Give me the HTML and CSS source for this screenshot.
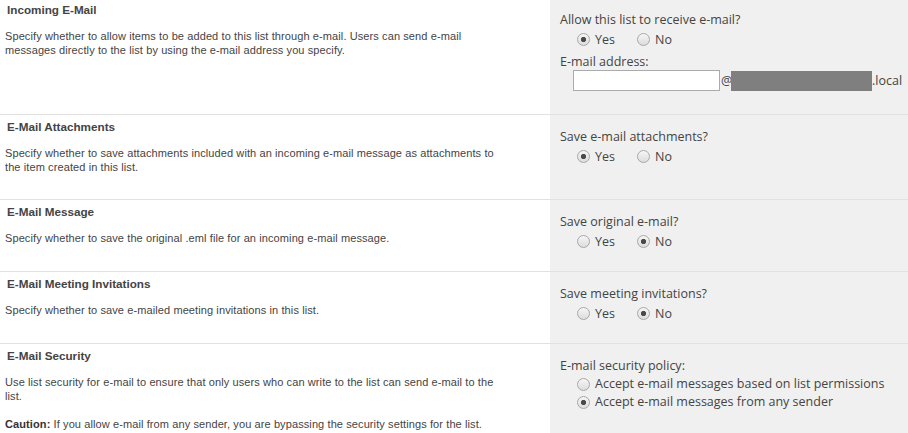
FILE: index.html
```html
<!DOCTYPE html>
<html lang="en">
<head>
<meta charset="utf-8">
<title>Incoming E-Mail Settings</title>
<link rel="stylesheet" href="styles.css">
</head>
<body>
<div class="settings">
  <section class="section section-first">
    <div class="desc-cell">
      <h3 class="heading">Incoming E-Mail</h3>
      <p class="desc">Specify whether to allow items to be added to this list through e-mail. Users can send e-mail<br>messages directly to the list by using the e-mail address you specify.</p>
    </div>
    <div class="ctrl-cell">
      <div class="ctrl-label">Allow this list to receive e-mail?</div>
      <div class="radio-row">
        <label class="radio"><input type="radio" name="allow" checked><span>Yes</span></label>
        <label class="radio"><input type="radio" name="allow"><span>No</span></label>
      </div>
      <div class="ctrl-label ctrl-label-gap">E-mail address:</div>
      <div class="address-row">
        <input class="address-input" type="text" aria-label="E-mail address">
        <span class="at">@</span><span class="redacted"></span><span class="domain">.local</span>
      </div>
    </div>
  </section>

  <section class="section">
    <div class="desc-cell">
      <h3 class="heading">E-Mail Attachments</h3>
      <p class="desc">Specify whether to save attachments included with an incoming e-mail message as attachments to<br>the item created in this list.</p>
    </div>
    <div class="ctrl-cell">
      <div class="ctrl-label">Save e-mail attachments?</div>
      <div class="radio-row">
        <label class="radio"><input type="radio" name="attach" checked><span>Yes</span></label>
        <label class="radio"><input type="radio" name="attach"><span>No</span></label>
      </div>
    </div>
  </section>

  <section class="section">
    <div class="desc-cell">
      <h3 class="heading">E-Mail Message</h3>
      <p class="desc">Specify whether to save the original .eml file for an incoming e-mail message.</p>
    </div>
    <div class="ctrl-cell">
      <div class="ctrl-label">Save original e-mail?</div>
      <div class="radio-row">
        <label class="radio"><input type="radio" name="orig"><span>Yes</span></label>
        <label class="radio"><input type="radio" name="orig" checked><span>No</span></label>
      </div>
    </div>
  </section>

  <section class="section">
    <div class="desc-cell">
      <h3 class="heading">E-Mail Meeting Invitations</h3>
      <p class="desc">Specify whether to save e-mailed meeting invitations in this list.</p>
    </div>
    <div class="ctrl-cell">
      <div class="ctrl-label">Save meeting invitations?</div>
      <div class="radio-row">
        <label class="radio"><input type="radio" name="meet"><span>Yes</span></label>
        <label class="radio"><input type="radio" name="meet" checked><span>No</span></label>
      </div>
    </div>
  </section>

  <section class="section">
    <div class="desc-cell">
      <h3 class="heading">E-Mail Security</h3>
      <p class="desc">Use list security for e-mail to ensure that only users who can write to the list can send e-mail to the<br>list.</p>
      <p class="desc desc-para"><strong>Caution:</strong> If you allow e-mail from any sender, you are bypassing the security settings for the list.<br>This means that anyone could send e-mail to the list and have it added without any authentication.</p>
    </div>
    <div class="ctrl-cell">
      <div class="ctrl-label">E-mail security policy:</div>
      <div class="radio-stack">
        <label class="radio"><input type="radio" name="sec"><span>Accept e-mail messages based on list permissions</span></label>
        <label class="radio"><input type="radio" name="sec" checked><span>Accept e-mail messages from any sender</span></label>
      </div>
    </div>
  </section>
</div>
</body>
</html>
```

FILE: styles.css
```css
html, body {
  margin: 0;
  padding: 0;
  background: #ffffff;
}

body {
  width: 908px;
  height: 433px;
  overflow: hidden;
}

.settings {
  display: flex;
  flex-direction: column;
}

.section {
  display: grid;
  grid-template-columns: 550px 1fr;
  border-top: 1px solid #e1e1e1;
}

.section-first {
  border-top: none;
}

.desc-cell {
  padding: 5px 8px 25px 5px;
  font-family: "Liberation Sans", Arial, sans-serif;
  font-size: 11px;
  color: #444444;
}

.section-first .desc-cell {
  padding-top: 3px;
}

.heading {
  margin: 0;
  padding-left: 2px;
  font-size: 11.7px;
  line-height: 14px;
  font-weight: bold;
  color: #444444;
}

.desc {
  margin: 12px 0 0;
  line-height: 14px;
  letter-spacing: 0.1px;
  white-space: nowrap;
}

.desc-para {
  margin-top: 14px;
}

.desc strong {
  color: #333333;
}

.ctrl-cell {
  background: #f0f0f0;
  padding: 13px 10px 20px 10px;
  font-family: "Open Sans", "Noto Sans", sans-serif;
  font-size: 12.5px;
  color: #444444;
}

.section-first .ctrl-cell {
  padding-top: 11px;
  padding-bottom: 23px;
}

.ctrl-label {
  line-height: 17px;
}

.ctrl-label-gap {
  margin-top: 4px;
}

.radio-row {
  display: flex;
  gap: 22px;
  margin-top: 1px;
  padding-left: 17px;
  height: 20px;
  align-items: center;
}

.radio-stack {
  display: flex;
  flex-direction: column;
  padding-left: 17px;
}

.radio-stack .radio {
  height: 18px;
}

.radio {
  display: flex;
  align-items: center;
  gap: 5px;
  line-height: 17px;
}

.radio input {
  appearance: none;
  -webkit-appearance: none;
  margin: 0;
  width: 13px;
  height: 13px;
  border: 1px solid #a8a8a8;
  border-radius: 50%;
  background: linear-gradient(#f6f6f6, #dcdcdc);
  box-sizing: border-box;
  flex: none;
}

.radio-stack .radio input {
  margin-top: 3px;
}

.radio input:checked {
  background: radial-gradient(circle, #4a4a4a 0, #4a4a4a 2.2px, rgba(74,74,74,0) 3px), linear-gradient(#f6f6f6, #dcdcdc);
}

.address-row {
  display: flex;
  align-items: center;
  padding-left: 13px;
  height: 21px;
}

.address-input {
  box-sizing: border-box;
  width: 147px;
  height: 21px;
  margin: 0;
  border: 1px solid #ababab;
  background: #ffffff;
  padding: 0 3px;
}

.at {
  margin-left: 1px;
  width: 10px;
}

.redacted {
  width: 141px;
  height: 20px;
  background: #7f7f7f;
}

.domain {
  margin-left: 0;
}
```
